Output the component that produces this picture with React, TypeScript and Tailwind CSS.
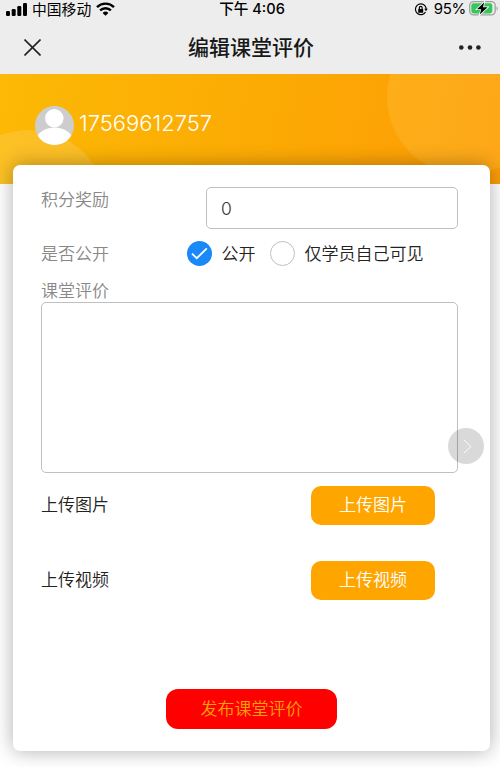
import * as React from "react"
import { clsx } from "clsx"

interface RadioOptionProps {
    label: string
    checked: boolean
    onSelect: () => void
}

function RadioOption({ label, checked, onSelect }: RadioOptionProps) {
    return (
        <button type="button" role="radio" aria-checked={checked} onClick={onSelect} className="flex items-center gap-[9.5px]">
            <span
                className={clsx(
                    "flex size-[25px] shrink-0 items-center justify-center rounded-full",
                    checked ? "bg-[#1989fa]" : "border border-[#c0c0c0] bg-white"
                )}
            >
                {checked && (
                    <svg width="17" height="13" viewBox="0 0 17 13" fill="none" stroke="white" strokeWidth="1.8">
                        <path d="M1 6.7 5.8 11.2 15.8 1.3" />
                    </svg>
                )}
            </span>
            <span className="text-[17px] leading-6 text-[#222]">{label}</span>
        </button>
    )
}

function UploadRow({ label }: { label: string }) {
    return (
        <div className="flex h-[39px] items-center justify-between pr-[55px]">
            <span className="pb-px text-[17px] leading-6 text-[#222]">{label}</span>
            <button type="button" className="h-[39px] w-[124px] rounded-[10px] bg-[#ffa500] pt-[2px] text-[17px] text-white">
                {label}
            </button>
        </div>
    )
}

function StatusBar() {
    return (
        <div className="flex h-[18px] items-center text-black">
            <div className="flex flex-1 items-center pl-[6px]">
                <svg width="21" height="14" viewBox="0 0 21 14" fill="currentColor">
                    <rect x="0" y="9" width="4" height="5" rx="1.2" />
                    <rect x="5.7" y="7" width="4" height="7" rx="1.2" />
                    <rect x="11.3" y="4" width="4" height="10" rx="1.2" />
                    <rect x="17" y="1" width="4" height="13" rx="1.2" />
                </svg>
                <span className="ml-[5px] pt-px text-[14.8px] leading-[18px] font-normal">中国移动</span>
                <svg className="ml-[5px]" width="19" height="14" viewBox="0 0 19 14" fill="none" stroke="currentColor" strokeWidth="2.4">
                    <path d="M1 5.1a12.2 12.2 0 0 1 17 0M4.1 8.4a7.8 7.8 0 0 1 10.8 0" />
                    <path d="M9.5 13.8 6.6 10.9a4.2 4.2 0 0 1 5.8 0Z" fill="currentColor" stroke="none" />
                </svg>
            </div>
            <span className="text-[14.6px] leading-[18px] font-medium">下午 4:06</span>
            <div className="flex flex-1 items-center justify-end pr-[2px]">
                <svg width="14" height="13" viewBox="0 0 14 13" fill="none" stroke="currentColor" strokeWidth="1.2">
                    <path d="M11.2 3.1A5.4 5.4 0 1 0 11.5 9" />
                    <path d="M11.2 3.1q1 1.4 1 3.2" />
                    <path d="M10.2 5.7h3.6L12 8.2Z" fill="currentColor" stroke="none" />
                    <rect x="4.2" y="6" width="5" height="3.7" rx=".5" fill="currentColor" stroke="none" />
                    <path d="M5.3 6V4.8a1.4 1.4 0 0 1 2.8 0V6" />
                </svg>
                <span className="ml-[6px] text-[15px] leading-[18px] font-normal tracking-[-0.3px]">95%</span>
                <svg className="ml-[3px] -mt-px" width="29" height="15" viewBox="0 0 29 15">
                    <rect x=".7" y=".7" width="25.5" height="13.2" rx="3.8" fill="none" stroke="#a0a0a0" strokeWidth="1.3" />
                    <rect x="2.3" y="2.2" width="21" height="10.2" rx="2.4" fill="#35c759" />
                    <path d="M27.6 5.2v4.4q1.2-.7 1.2-2.2t-1.2-2.2" fill="#a0a0a0" />
                    <path d="M15.2 1.2 8 8.3h4.2L10.8 13.6l7.8-7.3h-4.6Z" fill="black" stroke="white" strokeWidth="1.6" paintOrder="stroke" />
                </svg>
            </div>
        </div>
    )
}

function TitleBar() {
    return (
        <div className="flex h-14 items-center justify-between pt-[2px] pr-[19px] pl-6">
            <button type="button" aria-label="关闭" className="w-[19px]">
                <svg width="17" height="17" viewBox="0 0 17 17" stroke="#222" strokeWidth="1.6">
                    <path d="M.5.5l16 16M16.5.5l-16 16" />
                </svg>
            </button>
            <h1 className="pt-[2px] text-[21px] leading-[30px] font-medium text-[#181818]">编辑课堂评价</h1>
            <button type="button" aria-label="更多">
                <svg width="22" height="5" viewBox="0 0 22 5" fill="#222">
                    <circle cx="2.3" cy="2.5" r="2.3" />
                    <circle cx="11" cy="2.5" r="2.3" />
                    <circle cx="19.4" cy="2.5" r="2.3" />
                </svg>
            </button>
        </div>
    )
}

export default function App() {
    const [points, setPoints] = React.useState("0")
    const [isPublic, setIsPublic] = React.useState(true)
    const [comment, setComment] = React.useState("")

    return (
        <div className="relative h-[767px] w-[500px] overflow-hidden bg-white font-['Inter','Noto_Sans_CJK_SC',sans-serif] font-[350]">
            <header className="bg-[#ededed]">
                <StatusBar />
                <TitleBar />
            </header>

            {/* User banner */}
            <div className="relative h-[110px] overflow-hidden bg-linear-100 from-[#fcb905] via-[#fcab04] to-[#fe9c06]">
                <span className="absolute top-[-55px] left-[387px] size-[156px] rounded-full bg-[#ffe070]/18" />
                <span className="absolute top-[56px] left-[-49px] size-[156px] rounded-full bg-white/13" />
                <div className="relative flex items-start pt-8 pl-[35px]">
                    <svg width="39" height="39" viewBox="0 0 39 39">
                        <circle cx="19.5" cy="19.5" r="19.5" fill="#cdcdcd" />
                        <circle cx="19.3" cy="12.2" r="9.2" fill="white" />
                        <path d="M2.7 29.4C6 24.5 13 21.6 19.5 21.6S33 24.5 36.3 29.4A19.5 19.5 0 0 1 2.7 29.4Z" fill="white" />
                    </svg>
                    <span className="ml-[5px] text-[22px] leading-[34px] font-light text-white">17569612757</span>
                </div>
            </div>

            {/* Evaluation form */}
            <form
                onSubmit={(e) => e.preventDefault()}
                className="relative mt-[-19px] ml-[13px] flex h-[586px] w-[477px] flex-col rounded-[7px] bg-white pt-[22px] pr-8 pl-7 shadow-[0_0_20px_rgba(0,0,0,0.32)]"
            >
                <div className="flex h-[42px] items-start justify-between text-[17px]">
                    <label htmlFor="points" className="pt-px leading-6 text-[#888]">
                        积分奖励
                    </label>
                    <input
                        id="points"
                        value={points}
                        onChange={(e) => setPoints(e.target.value)}
                        className="h-[42px] w-[252px] rounded-[5px] border border-[#c0c0c0] px-[14px] text-[17.5px] text-[#333] outline-none"
                    />
                </div>

                <div role="radiogroup" className="mt-3 flex h-[25px] items-center">
                    <span className="w-[146px] text-[17px] leading-6 text-[#888]">是否公开</span>
                    <RadioOption label="公开" checked={isPublic} onSelect={() => setIsPublic(true)} />
                    <span className="w-[14.5px]" />
                    <RadioOption label="仅学员自己可见" checked={!isPublic} onSelect={() => setIsPublic(false)} />
                </div>

                <label htmlFor="comment" className="mt-[13px] h-[23px] text-[17px] leading-6 text-[#888]">
                    课堂评价
                </label>
                <textarea
                    id="comment"
                    value={comment}
                    onChange={(e) => setComment(e.target.value)}
                    className="block h-[171px] w-[417px] shrink-0 resize-none rounded-[5px] border border-[#c0c0c0] p-3 text-[17px] outline-none"
                />

                <div className="mt-[12.5px] -mr-8 flex flex-col gap-[36px]">
                    <UploadRow label="上传图片" />
                    <UploadRow label="上传视频" />
                </div>

                <button
                    type="submit"
                    className="mt-[89.5px] ml-[125px] h-10 w-[171px] rounded-xl bg-[#f00] pt-[2px] text-[17px] text-[#ffa500]"
                >
                    发布课堂评价
                </button>
            </form>

            {/* Floating forward button */}
            <button
                type="button"
                aria-label="前进"
                className="absolute top-[428px] left-[448px] flex size-9 items-center justify-center rounded-full bg-black/15 pl-[2px]"
            >
                <svg width="9" height="15" viewBox="0 0 9 15" fill="none" stroke="white" strokeWidth="0.9">
                    <path d="M1 1l7 6.5L1 14" />
                </svg>
            </button>
        </div>
    )
}
